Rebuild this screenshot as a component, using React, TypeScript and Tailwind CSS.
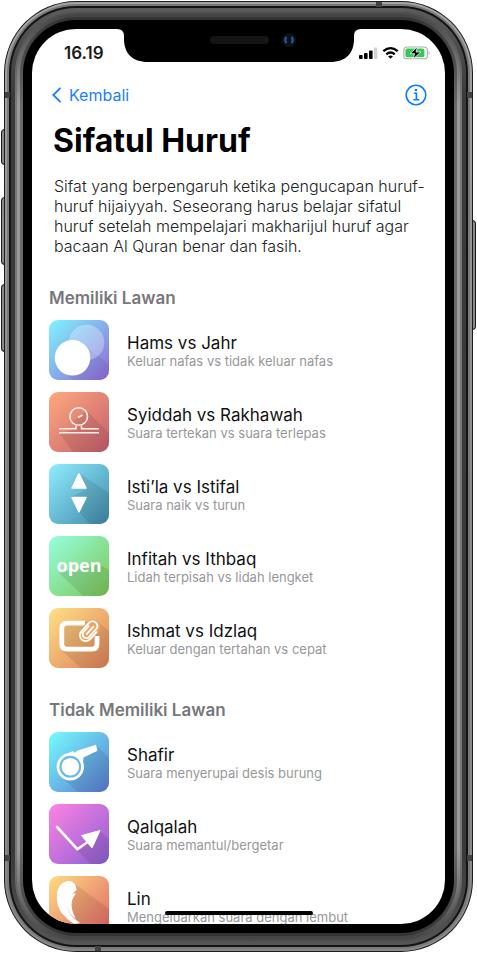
import type { ReactNode } from "react";

type Item = { title: string; detail: string; art: ReactNode };

function Tile({ id, from, to, children }: { id: string; from: string; to: string; children: ReactNode }) {
  return (
    <svg viewBox="0 0 60 60" className="size-[60px] shrink-0 rounded-[9px]" aria-hidden="true">
      <defs>
        <linearGradient id={id} x1="0" y1="0" x2="1" y2="1">
          <stop offset="0" stopColor={from} />
          <stop offset="1" stopColor={to} />
        </linearGradient>
      </defs>
      <rect width="60" height="60" fill={`url(#${id})`} />
      {children}
    </svg>
  );
}

const shade = { fill: "#000000", opacity: 0.09 };

const paired: Item[] = [
  {
    title: "Hams vs Jahr",
    detail: "Keluar nafas vs tidak keluar nafas",
    art: (
      <Tile id="hams" from="#7df6ff" to="#9066d6">
        <path d="M36 26 60 44V60H24L12 50Z" {...shade} opacity={0.06} />
        <circle cx="37.5" cy="22.5" r="17.8" fill="#ffffff" opacity="0.3" />
        <circle cx="23.5" cy="37.8" r="17.8" fill="#ffffff" />
      </Tile>
    ),
  },
  {
    title: "Syiddah vs Rakhawah",
    detail: "Suara tertekan vs suara terlepas",
    art: (
      <Tile id="syiddah" from="#ffa97e" to="#c65e6e">
        <path d="M37 18 60 41V60H24L11 42 27 36 23 31Z" {...shade} />
        <g fill="none" stroke="#fff2ec" strokeWidth="1.6">
          <circle cx="29.7" cy="24.5" r="8.8" />
          <path d="M10 36.7H27V33.5M32.5 33.5V36.7H50M10 40.7H50M29 25.5 33.5 23" />
        </g>
      </Tile>
    ),
  },
  {
    title: "Isti’la vs Istifal",
    detail: "Suara naik vs turun",
    art: (
      <Tile id="istila" from="#90edff" to="#4089a9">
        <path d="M30 9 60 29V60H41L30 48 22 33 38 25Z" {...shade} />
        <g fill="#ffffff" stroke="#ffffff" strokeWidth="1.5" strokeLinejoin="round">
          <path d="M30 9.8 37 24H23Z" />
          <path d="M30 47.8 37 33.5H23Z" />
        </g>
      </Tile>
    ),
  },
  {
    title: "Infitah vs Ithbaq",
    detail: "Lidah terpisah vs lidah lengket",
    art: (
      <Tile id="infitah" from="#96ffe0" to="#7cc654">
        <path d="M50 28 60 34V60H34L10 37Z" {...shade} />
        <text
          x="30"
          y="36"
          textAnchor="middle"
          fill="#ffffff"
          fontFamily="Open Sans, Noto Sans, sans-serif"
          fontWeight="700"
          fontSize="18"
        >
          open
        </text>
      </Tile>
    ),
  },
  {
    title: "Ishmat vs Idzlaq",
    detail: "Keluar dengan tertahan vs cepat",
    art: (
      <Tile id="ishmat" from="#ffe086" to="#de8058">
        <path d="M48 13 60 23V60H32L12 42V14Z" {...shade} />
        <path
          d="M36 15.2H18Q12.8 15.2 12.8 20.4V36Q12.8 41.2 18 41.2H42.8Q48 41.2 48 36V28"
          fill="none"
          stroke="#ffffff"
          strokeWidth="4.8"
        />
        <g transform="rotate(42 40.5 22.5)" fill="none" strokeLinecap="round">
          <rect x="33" y="10" width="15" height="26" rx="7.5" fill="#eaa466" />
          <path
            d="M37 20V28.5A4 4 0 0 0 44.5 28.5V16.5A4.8 4.8 0 0 0 35 16.5V28.5A5.8 5.8 0 0 0 46.8 28.5V19M40.8 17V27"
            stroke="#ffffff"
            strokeWidth="1.8"
          />
        </g>
      </Tile>
    ),
  },
];

const unpaired: Item[] = [
  {
    title: "Shafir",
    detail: "Suara menyerupai desis burung",
    art: (
      <Tile id="shafir" from="#75fcff" to="#5b7bd3">
        <path d="M48 14 60 26V60H29L11 44 34 26Z" {...shade} />
        <path d="M14 23.5 24 19 25.5 20.8 28 18.8 47 12.8 48.5 18.8 34.5 25.5 34 31 27 23.2 16 25Z" fill="#ffffff" />
        <circle cx="21.3" cy="34.7" r="12.3" fill="#66b8ef" stroke="#ffffff" strokeWidth="2.8" />
        <circle cx="21.3" cy="34.7" r="8.8" fill="#ffffff" />
      </Tile>
    ),
  },
  {
    title: "Qalqalah",
    detail: "Suara memantul/bergetar",
    art: (
      <Tile id="qalqalah" from="#ff82e2" to="#8a60d4">
        <path d="M51 27 60 35V60H41L28 46 40 37Z" {...shade} />
        <path d="M8 23 28.5 45.3 40 37" fill="none" stroke="#ffffff" strokeWidth="2.6" strokeLinecap="round" strokeLinejoin="round" />
        <path d="M51 26.5 32.5 31.5 43 44Z" fill="#ffffff" stroke="#ffffff" strokeWidth="1" strokeLinejoin="round" />
      </Tile>
    ),
  },
  {
    title: "Lin",
    detail: "Mengeluarkan suara dengan lembut",
    art: (
      <Tile id="lin" from="#ffdc82" to="#e06264">
        <path d="M26 8 60 33V60H40L20 44Z" {...shade} />
        <path
          d="M19 5C11 6 7.5 13 7.8 22 8 34 15 41 25 48L31 47C24 42 19 37 17.5 29 20 37 23 40 27 43 23 36 21 28 24 22L27 17 23 18 27.5 14C27.5 8 24 5 19 5Z"
          fill="#ffffff"
        />
      </Tile>
    ),
  },
];

function Section({ title, items, className }: { title: string; items: Item[]; className: string }) {
  return (
    <section className={className}>
      <h2 className="mb-3 text-[17px] leading-5 font-semibold text-[#77777c]">{title}</h2>
      <ul className="flex flex-col gap-3">
        {items.map((item) => (
          <li key={item.title} className="flex items-center gap-[18px]">
            {item.art}
            <div className="min-w-0 pt-0.5 whitespace-nowrap">
              <h3 className="text-[17px] leading-5 text-[#111111]">{item.title}</h3>
              <p className="text-[13px] leading-4 text-[#97979b]">{item.detail}</p>
            </div>
          </li>
        ))}
      </ul>
    </section>
  );
}

function StatusIcons() {
  return (
    <svg viewBox="0 0 72 14" className="h-3.5 w-[72px]" role="img" aria-label="Sinyal, Wi-Fi, baterai mengisi">
      <g fill="#000000">
        <rect x="0" y="9" width="3.6" height="4" rx="1" />
        <rect x="5" y="7" width="3.6" height="6" rx="1" />
        <rect x="10" y="4.5" width="3.6" height="8.5" rx="1" />
        <rect x="15" y="1.5" width="3.4" height="11.5" rx="1" fill="#d2d2d2" />
      </g>
      <g fill="none" stroke="#000000" strokeWidth="2.2">
        <path d="M24.3 5.2Q31.5-1 38.7 5.2" />
        <path d="M27.3 8.3Q31.5 4.7 35.7 8.3" />
      </g>
      <path d="M29 10.3Q31.5 8.5 34 10.3L31.5 12.8Z" />
      <rect x="44.8" y="1" width="23.6" height="11.8" rx="3.4" fill="#ffffff" stroke="#a9a9a9" strokeWidth="1.1" />
      <path d="M69.6 5Q71.6 7 69.6 9Z" fill="#a9a9a9" />
      <rect x="46.4" y="2.6" width="19" height="8.6" rx="1.8" fill="#35c759" />
      <path d="M58.5.8 51 7.7H55.6L54 13 62 6H57Z" fill="#000000" stroke="#ffffff" strokeWidth=".8" />
    </svg>
  );
}

function Notch() {
  return (
    <svg viewBox="0 0 244 34" className="absolute -top-px left-1/2 h-[34px] w-[244px] -translate-x-1/2" aria-hidden="true">
      <path d="M0 0H244V1Q237 1 237 8V11C237 25 229 34 213 34H31C15 34 7 25 7 11V8Q7 1 0 1Z" fill="#000000" />
      <rect x="93" y="8" width="59" height="8" rx="4" fill="#161616" />
      <circle cx="172" cy="12" r="7" fill="#0e1118" />
      <path d="M169.5 9Q167 12 169.5 15M174.5 9Q177 12 174.5 15" fill="none" stroke="#235da5" strokeWidth="2" />
    </svg>
  );
}

const band = "absolute bg-[#3f4349]";
const sideKey = "absolute border border-[#1d1d1d] bg-[#8b8b8b]";

export default function App() {
  return (
    <div className="relative h-screen overflow-hidden bg-white px-1 pt-px pb-px font-[Inter,'Liberation_Sans',sans-serif]">
      <div className={`${sideKey} top-[129px] left-px h-9 w-1 rounded-l-sm`} />
      <div className={`${sideKey} top-[197px] left-px h-[68px] w-1 rounded-l-sm`} />
      <div className={`${sideKey} top-[284px] left-px h-[68px] w-1 rounded-l-sm`} />
      <div className={`${sideKey} top-[220px] right-px h-[110px] w-1 rounded-r-sm`} />

      {/* Phone body: each ring is one band of the metal edge */}
      <div className="relative h-full rounded-[72px] bg-[#1c1c1c] p-px">
        <div className="h-full rounded-[71px] bg-linear-to-b from-[#a2a6a2] via-[#8b8b8b] to-[#8c8888] p-0.5">
          <div className="h-full rounded-[69px] bg-[#7a7878] p-0.5">
            <div className="h-full rounded-[67px] bg-[#141414] p-0.5">
              <div className="h-full rounded-[65px] bg-[linear-gradient(#5b5b5b,#3a3a3a_90px,#3a3a3a_calc(100%-90px),#555555)] p-1">
                <div className="h-full rounded-[61px] bg-[linear-gradient(#4e4e4e,#777777_90px,#777777_calc(100%-90px),#4a4a4a)] p-0.5">
                  <div className="h-full rounded-[59px] bg-[linear-gradient(#444444,#9a9a9a_90px,#9a9a9a_calc(100%-90px),#444444)] p-[3px]">
                    <div className="h-full rounded-[56px] bg-[linear-gradient(#333333,#6a6a6a_90px,#6a6a6a_calc(100%-90px),#333333)] p-[3px]">
                      <div className="h-full rounded-[53px] bg-black p-[9px]">
                        <Screen />
                      </div>
                    </div>
                  </div>
                </div>
              </div>
            </div>
          </div>
        </div>
        <div className={`${band} top-[91px] left-px h-1.5 w-[5px]`} />
        <div className={`${band} top-[91px] right-px h-1.5 w-[5px]`} />
        <div className={`${band} bottom-[91px] left-px h-1.5 w-[5px]`} />
        <div className={`${band} right-px bottom-[91px] h-1.5 w-[5px]`} />
        <div className={`${band} top-px right-[91px] h-[5px] w-1.5`} />
        <div className={`${band} bottom-px left-[91px] h-[5px] w-1.5`} />
      </div>
    </div>
  );
}

function Screen() {
  return (
    <div className="relative flex h-full flex-col overflow-hidden rounded-[44px] bg-white">
      <Notch />
      <header>
        <div className="flex items-center justify-between pt-3.5 pr-3.5 pl-8">
          <time className="text-[17px] leading-5 font-semibold text-[#1a1a1a]">16.19</time>
          <StatusIcons />
        </div>
        <nav className="flex items-center justify-between pt-5 pr-[18px] pl-5">
          <button type="button" className="flex items-center gap-2 text-[16px] leading-6 text-[#1a80f6]">
            <svg viewBox="0 0 9 16" className="h-4 w-[9px]" fill="none" stroke="currentColor" strokeWidth="1.8" strokeLinecap="round" aria-hidden="true">
              <path d="M8 1.3 1.3 8 8 14.7" />
            </svg>
            Kembali
          </button>
          <button type="button" aria-label="Info" className="text-[#0a7cff]">
            <svg viewBox="0 0 22 22" className="size-[22px]" fill="none" stroke="currentColor" strokeWidth="1.6" aria-hidden="true">
              <circle cx="11" cy="11" r="9.8" />
              <path d="M8.8 9.2H11.4V15.8M8.3 15.8H14.3" />
              <circle cx="11" cy="6" r="1.3" fill="currentColor" stroke="none" />
            </svg>
          </button>
        </nav>
      </header>
      <main className="min-h-0 flex-1 overflow-hidden pr-5 pl-[17px]">
        <h1 className="mt-3.5 pl-1 text-[32px] leading-10 font-bold text-black">Sifatul Huruf</h1>
        <p className="mt-[15px] pl-[5px] text-[16px] leading-5 font-light text-[#222222]">
          Sifat yang berpengaruh ketika pengucapan huruf-huruf hijaiyyah. Seseorang harus belajar sifatul huruf setelah
          mempelajari makharijul huruf agar bacaan Al Quran benar dan fasih.
        </p>
        <Section title="Memiliki Lawan" items={paired} className="mt-8" />
        <Section title="Tidak Memiliki Lawan" items={unpaired} className="mt-8" />
      </main>
      <div className="absolute bottom-[9px] left-1/2 h-1 w-[148px] -translate-x-1/2 rounded-full bg-black" />
    </div>
  );
}
